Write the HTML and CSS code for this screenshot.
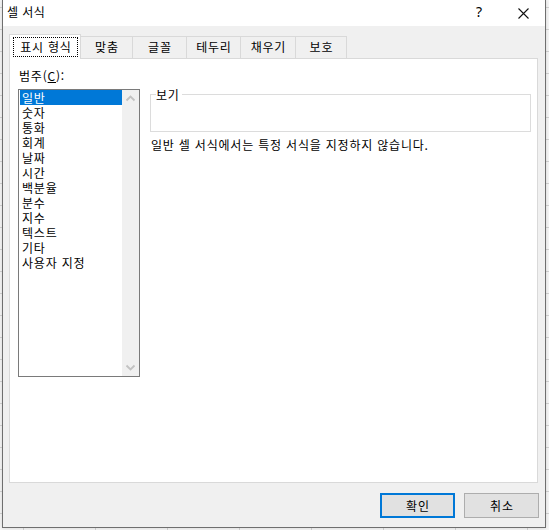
FILE: index.html
```html
<!DOCTYPE html>
<html lang="ko">
<head>
<meta charset="utf-8">
<title>셀 서식</title>
<link rel="stylesheet" href="styles.css">
</head>
<body>
<div class="dialog">
  <div class="titlebar">
    <span class="title">셀 서식</span>
    <span class="help">?</span>
    <span class="close"><svg width="11" height="11" viewBox="0 0 11 11"><path d="M0.5 0.5L10.5 10.5M10.5 0.5L0.5 10.5" stroke="#111" stroke-width="1.1" fill="none"/></svg></span>
  </div>
  <div class="body">
    <div class="tabs">
      <div class="tab active"><span class="focus">표시 형식</span></div>
      <div class="tab w53">맞춤</div>
      <div class="tab w55">글꼴</div>
      <div class="tab w55">테두리</div>
      <div class="tab w56">채우기</div>
      <div class="tab w52">보호</div>
    </div>
    <div class="panel">
      <div class="left">
        <div class="label">범주(<u>C</u>):</div>
        <div class="listbox">
          <ul class="items">
            <li class="selected">일반</li>
            <li>숫자</li>
            <li>통화</li>
            <li>회계</li>
            <li>날짜</li>
            <li>시간</li>
            <li>백분율</li>
            <li>분수</li>
            <li>지수</li>
            <li>텍스트</li>
            <li>기타</li>
            <li>사용자 지정</li>
          </ul>
          <div class="scrollbar">
            <span class="arrow"><svg width="17" height="17" viewBox="0 0 17 17"><path d="M4.5 10.5L8.5 6.5L12.5 10.5" stroke="#c2c2c2" stroke-width="1.8" fill="none"/></svg></span>
            <span class="arrow"><svg width="17" height="17" viewBox="0 0 17 17"><path d="M4.5 6.5L8.5 10.5L12.5 6.5" stroke="#c2c2c2" stroke-width="1.8" fill="none"/></svg></span>
          </div>
        </div>
      </div>
      <div class="right">
        <fieldset class="group"><legend>보기</legend></fieldset>
        <p class="desc">일반 셀 서식에서는 특정 서식을 지정하지 않습니다.</p>
      </div>
    </div>
    <div class="buttons">
      <button class="btn default">확인</button>
      <button class="btn">취소</button>
    </div>
  </div>
</div>
</body>
</html>
```
FILE: styles.css
```css
html, body {
  margin: 0;
  padding: 0;
}
body {
  width: 549px;
  height: 530px;
  overflow: hidden;
  background-color: #f7f7f7;
  background-image:
    linear-gradient(to right, #d4d4d4 1px, transparent 1px),
    linear-gradient(to bottom, #d4d4d4 1px, transparent 1px);
  background-size: 72px 22px;
  background-position: 23px 7px;
  font-family: "Noto Sans CJK KR", "Noto Sans", sans-serif;
  font-size: 12px;
  letter-spacing: 0.8px;
  color: #000;
}
.dialog {
  margin-left: 2px;
  width: 542px;
  height: 527px;
  border: 1px solid #6f6f6f;
  border-top: 0;
  display: flex;
  flex-direction: column;
  background: #f0f0f0;
  box-shadow: 0 0 4px rgba(0,0,0,0.15);
}
.titlebar {
  height: 26px;
  box-sizing: border-box;
  padding: 0 16px 2px 4px;
  background: #fff;
  display: flex;
  align-items: center;
}
.title {
  line-height: 16px;
  letter-spacing: 0.4px;
}
.help {
  margin-left: auto;
  margin-right: 36px;
  font-family: "Noto Sans", sans-serif;
  font-size: 14px;
  line-height: 16px;
  letter-spacing: 0;
}
.close {
  display: flex;
  width: 11px;
  height: 11px;
  margin-top: 3px;
}
.body {
  flex: 1;
  display: flex;
  flex-direction: column;
  padding: 8px 7px 9px 6px;
}
.tabs {
  display: flex;
  align-items: flex-end;
  height: 24px;
}
.tab {
  box-sizing: border-box;
  height: 22px;
  border: 1px solid #d9d9d9;
  border-bottom: 0;
  margin-right: -1px;
  background: #f0f0f0;
  text-align: center;
  line-height: 20px;
  text-indent: 0.8px;
}
.tab.active {
  width: 72px;
  height: 25px;
  margin-bottom: -1px;
  background: #fff;
  position: relative;
  z-index: 1;
}
.focus {
  display: block;
  box-sizing: border-box;
  height: 20px;
  margin: 2px 2px 0 3px;
  border: 1px dotted #000;
  line-height: 18px;
}
.w52 { width: 52px; }
.w53 { width: 53px; }
.w55 { width: 55px; }
.w56 { width: 56px; }
.panel {
  flex: 1;
  display: flex;
  background: #fff;
  border: 1px solid #d9d9d9;
  padding: 9px 6px 0 8px;
}
.left {
  width: 122px;
  display: flex;
  flex-direction: column;
}
.label {
  line-height: 16px;
  margin-bottom: 5px;
  padding-left: 1px;
}
.label u {
  text-underline-offset: 1px;
}
.listbox {
  box-sizing: border-box;
  width: 122px;
  height: 288px;
  border: 1px solid #7a7a7a;
  display: flex;
}
.items {
  list-style: none;
  margin: 0 0 0 1px;
  padding: 0;
  width: 102px;
}
.items li {
  height: 15px;
  line-height: 15px;
  padding-left: 2px;
  white-space: nowrap;
}
.items li.selected {
  background: #0078d7;
  color: #fff;
}
.scrollbar {
  width: 17px;
  background: #f0f0f0;
  display: flex;
  flex-direction: column;
  justify-content: space-between;
}
.arrow {
  display: flex;
  width: 17px;
  height: 17px;
}
.right {
  flex: 1;
  margin-left: 10px;
  display: flex;
  flex-direction: column;
}
.group {
  box-sizing: border-box;
  margin: 20px 0 0 0;
  height: 44px;
  padding: 0 0 0 5px;
  border: 1px solid #dcdcdc;
  min-inline-size: 0;
}
.group legend {
  padding: 0 2px 0 0;
  line-height: 13px;
}
.desc {
  margin: 5px 0 0 1px;
  line-height: 16px;
}
.buttons {
  display: flex;
  justify-content: flex-end;
  gap: 9px;
  margin-top: 10px;
  margin-right: -1px;
}
.btn {
  box-sizing: border-box;
  width: 75px;
  height: 25px;
  margin: 0;
  padding: 0 0 0 0.8px;
  background: #e1e1e1;
  border: 1px solid #adadad;
  font-family: "Noto Sans CJK KR", "Noto Sans", sans-serif;
  font-size: 12px;
  letter-spacing: 0.8px;
  line-height: 16px;
  color: #000;
}
.btn.default {
  border: 2px solid #0078d7;
}
```
